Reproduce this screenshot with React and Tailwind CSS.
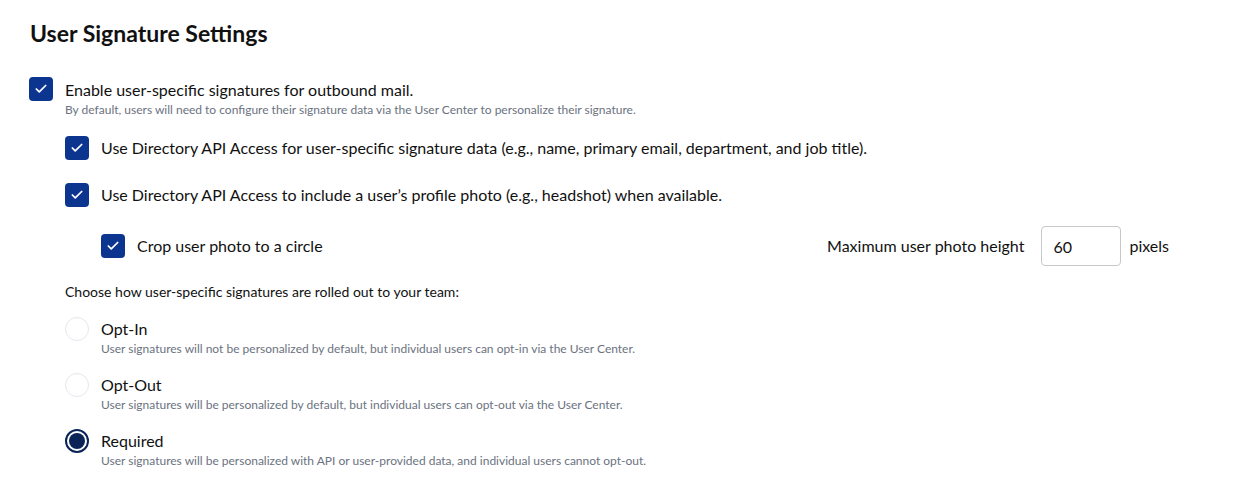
import { Check } from 'lucide-react';

function Box({ checked = true }) {
  return (
    <span className="w-6 h-6 shrink-0 rounded-[4px] bg-[#0c3590] flex items-center justify-center">
      {checked && <Check size={14} strokeWidth={3} className="text-white" />}
    </span>
  );
}

function Radio({ checked }) {
  return checked ? (
    <span className="w-6 h-6 shrink-0 rounded-full border-2 border-[#0a2458] bg-white flex items-center justify-center">
      <span className="w-4 h-4 rounded-full bg-[#0a2458]" />
    </span>
  ) : (
    <span className="w-6 h-6 shrink-0 rounded-full border border-[#e3e8ef] bg-white" />
  );
}

const OPTIONS = [
  { label: 'Opt-In', desc: 'User signatures will not be personalized by default, but individual users can opt-in via the User Center.' },
  { label: 'Opt-Out', desc: 'User signatures will be personalized by default, but individual users can opt-out via the User Center.' },
  { label: 'Required', desc: 'User signatures will be personalized with API or user-provided data, and individual users cannot opt-out.', checked: true },
];

export default function App() {
  return (
    <div className="bg-white text-[#111] px-[29px] pt-[20px] min-h-[482px]" style={{ fontFamily: 'Lato, "Open Sans", sans-serif' }}>
      <h1 className="text-[23px] font-bold leading-[26px] ml-px">User Signature Settings</h1>

      {/* main toggle */}
      <div className="flex gap-3 mt-[31px]">
        <Box />
        <div className="pt-[1px]">
          <p className="text-[16px] leading-[24px]">Enable user-specific signatures for outbound mail.</p>
          <p className="text-[12px] leading-[16px] text-[#6b7280]">By default, users will need to configure their signature data via the User Center to personalize their signature.</p>
        </div>
      </div>

      <div className="ml-9">
        <label className="flex items-center gap-3 mt-[18px]">
          <Box />
          <span className="text-[16px]">Use Directory API Access for user-specific signature data (e.g., name, primary email, department, and job title).</span>
        </label>
        <label className="flex items-center gap-3 mt-[23px]">
          <Box />
          <span className="text-[16px]">Use Directory API Access to include a user’s profile photo (e.g., headshot) when available.</span>
        </label>

        <div className="flex items-center justify-between ml-9 mt-[19px] pr-[51px]">
          <label className="flex items-center gap-3">
            <Box />
            <span className="text-[16px]">Crop user photo to a circle</span>
          </label>
          <div className="flex items-center">
            <span className="text-[16px]">Maximum user photo height</span>
            <input
              readOnly
              value="60"
              className="ml-[17px] w-20 h-10 border border-[#c8c8c8] rounded-[4px] px-[11px] text-[16px] text-[#111] outline-none"
            />
            <span className="text-[16px] ml-2">pixels</span>
          </div>
        </div>

        <p className="text-[14px] mt-4 leading-[20px]">Choose how user-specific signatures are rolled out to your team:</p>

        {OPTIONS.map((o, i) => (
          <div key={o.label} className={`flex gap-3 ${i === 0 ? 'mt-[15px]' : 'mt-4'}`}>
            <Radio checked={o.checked} />
            <div>
              <p className="text-[16px] leading-[24px]">{o.label}</p>
              <p className="text-[12px] leading-[16px] text-[#6b7280]">{o.desc}</p>
            </div>
          </div>
        ))}
      </div>
    </div>
  );
}
